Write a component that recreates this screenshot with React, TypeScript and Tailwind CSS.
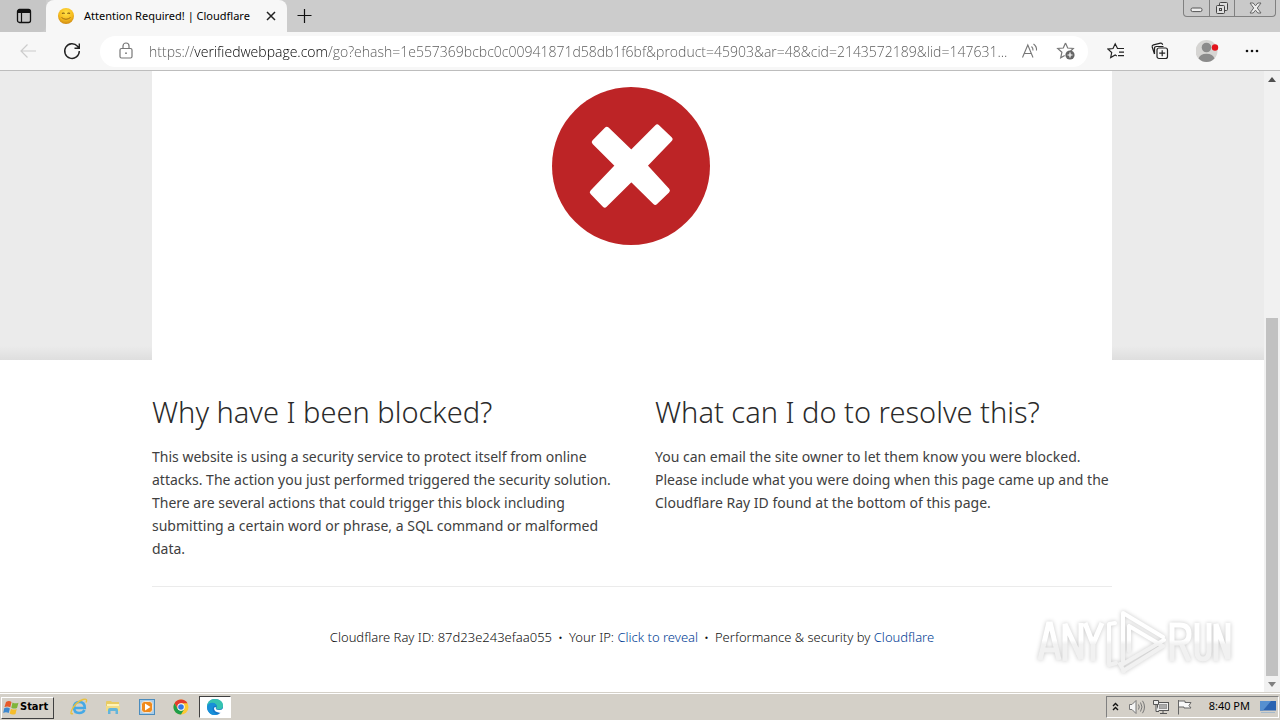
import type { ReactNode } from "react";

const URL_TEXT =
  "https://verifiedwebpage.com/go?ehash=1e557369bcbc0c00941871d58db1f6bf&product=45903&ar=48&cid=2143572189&lid=147631...";

function IconButton({ label, className, children }: { label: string; className: string; children: ReactNode }) {
  return (
    <button type="button" aria-label={label} className={`flex shrink-0 items-center justify-center ${className}`}>
      {children}
    </button>
  );
}

function Smiley() {
  return (
    <svg width="18" height="18" viewBox="0 0 18 18" className="shrink-0" aria-hidden="true">
      <defs>
        <radialGradient id="face" cx="0.5" cy="0.3" r="0.7">
          <stop offset="0" stopColor="#ffe14a" />
          <stop offset="0.6" stopColor="#f7bd1e" />
          <stop offset="1" stopColor="#cf8a14" />
        </radialGradient>
      </defs>
      <circle cx="9" cy="9" r="8" fill="url(#face)" />
      <path d="M5 6.5q1.3-1 2.6 0M10.4 6.5q1.3-1 2.6 0" stroke="#7a5310" strokeWidth="1.2" fill="none" />
      <path d="M4.5 10.500q4.500 3.500 9 0" stroke="#a06c14" strokeWidth="1" fill="none" />
    </svg>
  );
}

function TabStrip() {
  return (
    <header className="flex h-8 shrink-0 items-stretch bg-[#cccccc]">
      <IconButton label="Tab actions menu" className="w-[46px] rounded-br-md bg-[#c6c6c6] pl-0.5">
        <svg width="16" height="16" viewBox="0 0 16 16" fill="none" stroke="#111" aria-hidden="true">
          <rect x="1.5" y="1.5" width="13" height="13" rx="2" strokeWidth="1.3" />
          <path d="M2 3.5h12" strokeWidth="3" />
          <path d="M5.500 5v9" strokeWidth="1.2" />
        </svg>
      </IconButton>
      <div className="flex w-[241px] items-center rounded-t-lg bg-[#f7f7f7] pl-[11px]">
        <Smiley />
        <span className="ml-2 flex-1 pl-px text-[11px] whitespace-nowrap text-black">Attention Required! | Cloudflare</span>
        <IconButton label="Close tab" className="h-8 w-8">
          <svg width="10" height="10" viewBox="0 0 10 10" stroke="#222" strokeWidth="1.5" aria-hidden="true">
            <path d="M1 1l8 8M9 1l-8 8" />
          </svg>
        </IconButton>
      </div>
      <IconButton label="New tab" className="w-9">
        <svg width="16" height="16" viewBox="0 0 16 16" stroke="#111" strokeWidth="1.2" aria-hidden="true">
          <path d="M7.500 1v14M0.500 7.500h14" />
        </svg>
      </IconButton>
      <div className="mr-1 ml-auto flex h-[17px] overflow-hidden rounded-b border border-t-0 border-[#808080] bg-[#c9c9c9]">
        <IconButton label="Minimize" className="w-[25px] pt-1">
          <svg width="13" height="6" viewBox="0 0 13 6" fill="#eee" stroke="#555" aria-hidden="true">
            <rect x="1" y="1" width="11" height="3.6" rx="1.6" />
          </svg>
        </IconButton>
        <IconButton label="Restore" className="w-[26px] border-x border-[#808080]">
          <svg width="14" height="14" viewBox="0 0 14 14" fill="#ddd" stroke="#444" aria-hidden="true">
            <rect x="4.500" y="1.500" width="8" height="8" rx="1" />
            <rect x="1.500" y="4.500" width="8" height="8" rx="1" />
            <rect x="4.500" y="7.500" width="2" height="2" />
          </svg>
        </IconButton>
        <IconButton label="Close" className="w-10">
          <svg width="13" height="12" viewBox="0 0 13 12" fill="#eee" stroke="#666" aria-hidden="true">
            <path d="M1 1h3.200l2.300 2.800L8.800 1H12L8.300 6l3.700 5H8.800L6.500 8.200 4.200 11H1l3.700-5z" />
          </svg>
        </IconButton>
      </div>
    </header>
  );
}

function Toolbar() {
  return (
    <nav className="flex h-[39px] shrink-0 items-center border-b border-[#bdbdbd] bg-[#f7f7f7]">
      <IconButton label="Back" className="ml-3 h-8 w-8">
        <svg width="18" height="16" viewBox="0 0 18 16" fill="none" stroke="#cccccc" strokeWidth="1.2" aria-hidden="true">
          <path d="M17 8H2M8.500 1.500L2 8l6.500 6.500" />
        </svg>
      </IconButton>
      <IconButton label="Refresh" className="ml-3 h-8 w-8">
        <svg width="18" height="18" viewBox="0 0 18 18" fill="none" stroke="#222" strokeWidth="1.4" aria-hidden="true">
          <path d="M16.300 9A7.300 7.300 0 1 1 14.500 4.300L16 6M16.300 1.500V6.300H11.500" />
        </svg>
      </IconButton>
      <div className="ml-3 flex h-[31px] min-w-0 flex-1 items-center rounded-full bg-white pl-4">
        <svg width="20" height="20" viewBox="0 0 20 20" fill="none" stroke="#777" strokeWidth="1.2" className="shrink-0" aria-hidden="true">
          <rect x="4" y="7.500" width="12" height="9.500" rx="1.500" />
          <path d="M7 7.500V5a3 3 0 0 1 6 0v2.500" />
          <circle cx="10" cy="12.200" r="0.900" fill="#777" stroke="none" />
        </svg>
        <input
          aria-label="Address and search bar"
          defaultValue={URL_TEXT}
          className="ml-3 h-7 min-w-0 flex-1 bg-[linear-gradient(90deg,#555_46px,#000_46px,#000_180px,#555_180px)] bg-clip-text pl-px font-['Open_Sans',sans-serif] text-sm font-light text-transparent outline-none"
        />
        <IconButton label="Read aloud" className="h-8 w-9">
          <svg width="18" height="18" viewBox="0 0 18 18" fill="none" stroke="#777" strokeWidth="1.100" aria-hidden="true">
            <path d="M1.500 15.500L6.800 3l5.200 12.500M3.300 11.500h7M10.500 4.500q1.700 1.500 1.500 4M12.500 2q3.500 2.500 3 6.500" />
          </svg>
        </IconButton>
        <IconButton label="Add to favorites" className="mr-1 h-8 w-9">
          <svg width="20" height="20" viewBox="0 0 20 20" fill="none" stroke="#777" strokeWidth="1.200" aria-hidden="true">
            <path d="M9.500 2l2.200 5 5.600.5-3 3M9.500 2L7.300 7l-5.600.5 4.200 3.800-1.200 5.500 4-2.400" />
            <circle cx="14" cy="14" r="4.600" fill="#666" stroke="none" />
            <path d="M14 11.500v5M11.500 14h5" stroke="#fff" />
          </svg>
        </IconButton>
      </div>
      <div className="flex items-center pr-2 pl-2">
        <IconButton label="Favorites" className="h-8 w-10">
          <svg width="18" height="18" viewBox="0 0 18 18" fill="none" stroke="#222" strokeWidth="1.200" aria-hidden="true">
            <path d="M11.500 6.500h-1L8.200 1.800 6 6.500l-5 .6 3.700 3.400-1 5 4.500-2.500 1.600.9M11 6.500h6M12 10.200h5M11 13.700h6" />
          </svg>
        </IconButton>
        <IconButton label="Collections" className="ml-1 h-8 w-10">
          <svg width="18" height="18" viewBox="0 0 18 18" fill="none" stroke="#222" strokeWidth="1.200" aria-hidden="true">
            <path d="M3.500 12L1.200 5Q.8 3.300 2.500 2.800L9.500 1.200q1.500-.3 2.200 1.600M3.500 12V6.500q0-2 2-2h7" />
            <rect x="6" y="6" width="10.500" height="10.500" rx="2" />
            <path d="M11.200 8.200v6M8.200 11.200h6" />
          </svg>
        </IconButton>
        <IconButton label="Profile" className="ml-1 h-8 w-12">
          <svg width="24" height="24" viewBox="0 0 24 24" aria-hidden="true">
            <circle cx="10.500" cy="12" r="11" fill="#d6d5d3" />
            <circle cx="10.500" cy="8.500" r="4.800" fill="#8b8b8b" />
            <path d="M2.500 19.500Q4 14.800 10.500 14.800t8 4.700Q15 23 10.500 23t-8-3.500z" fill="#8b8b8b" />
            <circle cx="19" cy="8.500" r="3.200" fill="#e3131c" />
          </svg>
        </IconButton>
        <IconButton label="Settings and more" className="h-8 w-10">
          <svg width="14" height="4" viewBox="0 0 14 4" fill="#111" aria-hidden="true">
            <circle cx="2" cy="2" r="1.300" />
            <circle cx="7" cy="2" r="1.300" />
            <circle cx="12" cy="2" r="1.300" />
          </svg>
        </IconButton>
      </div>
    </nav>
  );
}

function ScrollBar() {
  return (
    <div className="flex w-4 shrink-0 flex-col items-center bg-[#f1f1f1]" aria-hidden="true">
      <div className="flex h-4 items-center">
        <svg width="8" height="5" viewBox="0 0 8 5" fill="#505050"><path d="M4 0l4 5H0z" /></svg>
      </div>
      <div className="flex w-full flex-1 flex-col items-center">
        <div className="flex-[231]" />
        <div className="w-3 flex-[357] bg-[#c1c1c1]" />
      </div>
      <div className="flex h-4 items-center">
        <svg width="8" height="5" viewBox="0 0 8 5" fill="#808080"><path d="M4 5l4-5H0z" /></svg>
      </div>
    </div>
  );
}

function Watermark() {
  return (
    <div className="absolute right-12 bottom-4">
      <svg width="196" height="72" viewBox="0 0 196 72" fill="none" className="drop-shadow-[0_0_2px_#c8c8c8]" role="img" aria-label="ANY RUN">
        <defs>
          <linearGradient id="mark" gradientUnits="userSpaceOnUse" x1="0" y1="0" x2="0" y2="72">
            <stop offset="0.5" stopColor="#ffffff" />
            <stop offset="0.56" stopColor="#f1f1f1" />
          </linearGradient>
        </defs>
        <g stroke="url(#mark)" strokeWidth="5">
          <path d="M4 56L12.500 20h2L23 56M7 46h13M29 57V20L45 55V19M49 19l8 21v17M57 40L66 19" />
          <path d="M73 60V20l6-1M73 61l7-2M87 60V9l40 24M87 60L128 36M87 67l40-25M84 60l4 7M93 22l32 19M93 22v25" strokeWidth="4" strokeLinejoin="round" strokeLinecap="round" />
          <path d="M136 57V21h8q9 0 9 9t-9 9h-8M145 39l8 18M161 19v28q0 8 6 8t6-8V19M180 57V20L192 55V19" />
        </g>
      </svg>
    </div>
  );
}

function BlockedPage() {
  return (
    <main className="flex min-w-0 flex-1 flex-col bg-white text-[#404040]">
      <div className="bg-[linear-gradient(180deg,#ebebeb_calc(100%-14px),#dedede)]">
        <div className="mx-auto flex h-[289px] w-full max-w-[960px] justify-center bg-white pt-4">
          <svg width="158" height="158" viewBox="36 36 476 476" className="mr-0.5" role="img" aria-label="Blocked">
            <circle cx="274" cy="274" r="238" fill="#bd2426" />
            <path
              d="M353 157l38 36-77 80 69 75-36 35-72-71-80 79-37-38 77-80-71-71 37-38 74 71z"
              fill="#fff" stroke="#fff" strokeWidth="16" strokeLinejoin="round"
            />
          </svg>
        </div>
      </div>
      <div className="mx-auto w-full max-w-[960px]">
        <div className="grid grid-cols-2 gap-x-[46px] border-b border-[#ebebeb] pt-8 pb-[26px]">
          <section>
            <h2 className="text-[29px] leading-10 font-light text-[#2b2b2b]">Why have I been blocked?</h2>
            <p className="mt-[13px] -mr-2 text-sm leading-[23px]">
              This website is using a security service to protect itself from online attacks. The action you just
              performed triggered the security solution. There are several actions that could trigger this block
              including submitting a certain word or phrase, a SQL command or malformed data.
            </p>
          </section>
          <section>
            <h2 className="text-[29px] leading-10 font-light text-[#2b2b2b]">What can I do to resolve this?</h2>
            <p className="mt-[13px] text-sm leading-[23px]">
              You can email the site owner to let them know you were blocked. Please include what you were doing when
              this page came up and the Cloudflare Ray ID found at the bottom of this page.
            </p>
          </section>
        </div>
        <footer className="flex justify-center gap-1.5 pt-10 text-[13px] leading-5 font-light text-[#111]">
          <span>Cloudflare Ray ID: 87d23e243efaa055</span>
          <span>•</span>
          <span>Your IP: <button type="button" className="text-[#003d94]">Click to reveal</button></span>
          <span>•</span>
          <span>Performance &amp; security by <a href="#cloudflare" className="text-[#003d94]">Cloudflare</a></span>
        </footer>
      </div>
    </main>
  );
}

function Taskbar() {
  return (
    <footer className="flex h-7 shrink-0 items-center border-t border-[#d4d0c8] bg-[#d4d0c8] px-px shadow-[inset_0_1px_0_#fff]">
      <button type="button" className="mt-0.5 flex h-[22px] w-[53px] items-center border border-t-white border-r-[#404040] border-b-[#404040] border-l-white pl-px text-[11px] font-bold text-black">
        <svg width="17" height="16" viewBox="0 0 17 16" aria-hidden="true">
          <path d="M3 2q3-2 5.500 0L7.300 7.300Q4.500 5.700 1.500 7z" fill="#e65a2a" />
          <path d="M9.500 2.500q3 1.600 6 .2L14 8q-3 1.300-5.700-.3z" fill="#7fb53a" />
          <path d="M1.200 8.200q3-1.400 5.700.2L5.700 13Q3 11.500.200 13z" fill="#3d88cf" />
          <path d="M8 8.700q2.700 1.600 5.700.4L12.500 14q-3 1.200-5.800-.4z" fill="#f5bd2b" />
        </svg>
        <span className="font-['DejaVu_Sans_Condensed','DejaVu_Sans',sans-serif]">Start</span>
      </button>
      <div className="ml-2 flex items-center">
        <IconButton label="Internet Explorer" className="h-6 w-[34px]">
          <svg width="18" height="18" viewBox="0 0 18 18" fill="none" aria-hidden="true">
            <path d="M14.500 12Q13 15 9.300 15 4 15 4 9.500T9.300 4q5.500 0 5.500 6H5" stroke="#45a9e6" strokeWidth="2.600" />
            <path d="M3 15.500Q-.5 17 2 11.500 6 4 13 1.500q5-1.500 3 3" stroke="#e9c13e" strokeWidth="1.400" />
          </svg>
        </IconButton>
        <IconButton label="File Explorer" className="h-6 w-[34px]">
          <svg width="16" height="16" viewBox="0 0 16 16" aria-hidden="true">
            <path d="M1 3q0-1 1-1h4l1 1h7v9H1z" fill="#e8cb63" />
            <path d="M2 5h12v3H2z" fill="#fff3b5" />
            <path d="M1 7h14v5H1z" fill="#f1dc86" />
            <path d="M3 15v-4q0-2 2-2h6q2 0 2 2v4h-2.500v-3h-5v3z" fill="#63b5db" />
          </svg>
        </IconButton>
        <IconButton label="Media Player" className="h-6 w-[34px]">
          <svg width="16" height="16" viewBox="0 0 16 16" aria-hidden="true">
            <rect x="0.500" y="0.500" width="15" height="15" fill="#a8cce8" stroke="#4b8cbd" />
            <rect x="2.500" y="2.500" width="11" height="11" rx="3" fill="#f08a1c" stroke="#fff" strokeWidth="0.700" />
            <path d="M6 4.500L11.500 8 6 11.500z" fill="#fff" />
          </svg>
        </IconButton>
        <IconButton label="Chrome" className="h-6 w-[34px]">
          <svg width="16" height="16" viewBox="0 0 16 16" aria-hidden="true">
            <circle cx="8" cy="8" r="7.500" fill="#fcc934" />
            <path d="M1.500 4.250A7.500 7.500 0 0 1 14.500 4.250H8L4.750 9.900z" fill="#e33b2e" />
            <path d="M1.500 4.250A7.500 7.500 0 0 0 8 15.500L11.250 9.900 8 11.700 4.750 9.900z" fill="#1e9e4a" />
            <circle cx="8" cy="8" r="3.700" fill="#fff" />
            <circle cx="8" cy="8" r="2.800" fill="#3478e5" />
          </svg>
        </IconButton>
        <IconButton label="Microsoft Edge" className="ml-px h-[22px] w-8 border border-t-[#404040] border-r-white border-b-white border-l-[#404040] bg-white">
          <svg width="18" height="18" viewBox="0 0 18 18" aria-hidden="true">
            <circle cx="9" cy="9" r="8" fill="#1477c9" />
            <path d="M1 9Q1.500 1 9 1q7.500 0 8 6.500.200 4-4.500 4-3-.200-2-2 1-3-2-4T1 9z" fill="#35c3b0" />
            <path d="M1 9q1-4.500 5.500-4.300Q10 5 10.500 8 7 7 6.500 10.500 6.500 15 12 16.500 4 18.500 1.500 12z" fill="#1890d8" />
            <path d="M10 9.500Q9 11.800 12.500 12q3 .200 4.500-1.500l1 2-3.500 2.500Q8 14 8 10.500q.5-2.500 2-1z" fill="#fff" />
          </svg>
        </IconButton>
      </div>
      <div className="ml-auto flex h-[22px] items-center border border-t-[#808080] border-r-white border-b-white border-l-[#808080] pl-[5px] text-[11px] text-black">
        <IconButton label="Show hidden icons" className="w-2">
          <svg width="7" height="9" viewBox="0 0 7 9" fill="none" stroke="#111" strokeWidth="1.400" aria-hidden="true">
            <path d="M1 4l2.500-2.500L6 4M1 8l2.500-2.500L6 8" />
          </svg>
        </IconButton>
        <IconButton label="Volume" className="ml-1.5 w-[22px]">
          <svg width="18" height="16" viewBox="0 0 18 16" fill="#f5f5f5" stroke="#777" aria-hidden="true">
            <path d="M1.500 5.500h2.500l4-4v13l-4-4H1.500z" />
            <path d="M10.500 5.500q1.500 2.500 0 5M12.500 3.500q3 4.500 0 9M14.500 1.800q4 6.200 0 12.400" fill="none" />
          </svg>
        </IconButton>
        <IconButton label="Network" className="ml-px w-6">
          <svg width="18" height="16" viewBox="0 0 18 16" fill="#eee" stroke="#555" aria-hidden="true">
            <rect x="5.500" y="3.500" width="11" height="8" />
            <rect x="7.500" y="5.500" width="7" height="4" fill="#aaa" stroke="#999" />
            <path d="M8 14.500h7M11 12v2" />
            <path d="M1.500 1.500h5v4h-5zM4 5.500v7h3" />
          </svg>
        </IconButton>
        <IconButton label="Action Center" className="w-6">
          <svg width="18" height="16" viewBox="0 0 18 16" fill="#f8f8f8" stroke="#666" aria-hidden="true">
            <path d="M2.500 1v14.500M2.500 2h6.500v1.500h6l-2 3 2 2.500H8V8H2.500z" />
          </svg>
        </IconButton>
        <time className="ml-3 whitespace-nowrap">8:40 PM</time>
        <IconButton label="Show desktop" className="ml-2 w-5">
          <svg width="17" height="14" viewBox="0 0 17 14" aria-hidden="true">
            <path d="M0 1h16v9.500H0z" fill="#2b64b2" />
            <path d="M0 1h11L3 10.500H0z" fill="#5690d0" />
            <path d="M1 12h14v1H1z" fill="#a5b9cb" />
          </svg>
        </IconButton>
      </div>
    </footer>
  );
}

export default function App() {
  return (
    <div className="flex h-screen flex-col overflow-hidden bg-white font-['Noto_Sans',sans-serif]">
      <TabStrip />
      <Toolbar />
      <div className="relative flex min-h-0 flex-1 overflow-hidden">
        <BlockedPage />
        <ScrollBar />
        <Watermark />
      </div>
      <Taskbar />
    </div>
  );
}
